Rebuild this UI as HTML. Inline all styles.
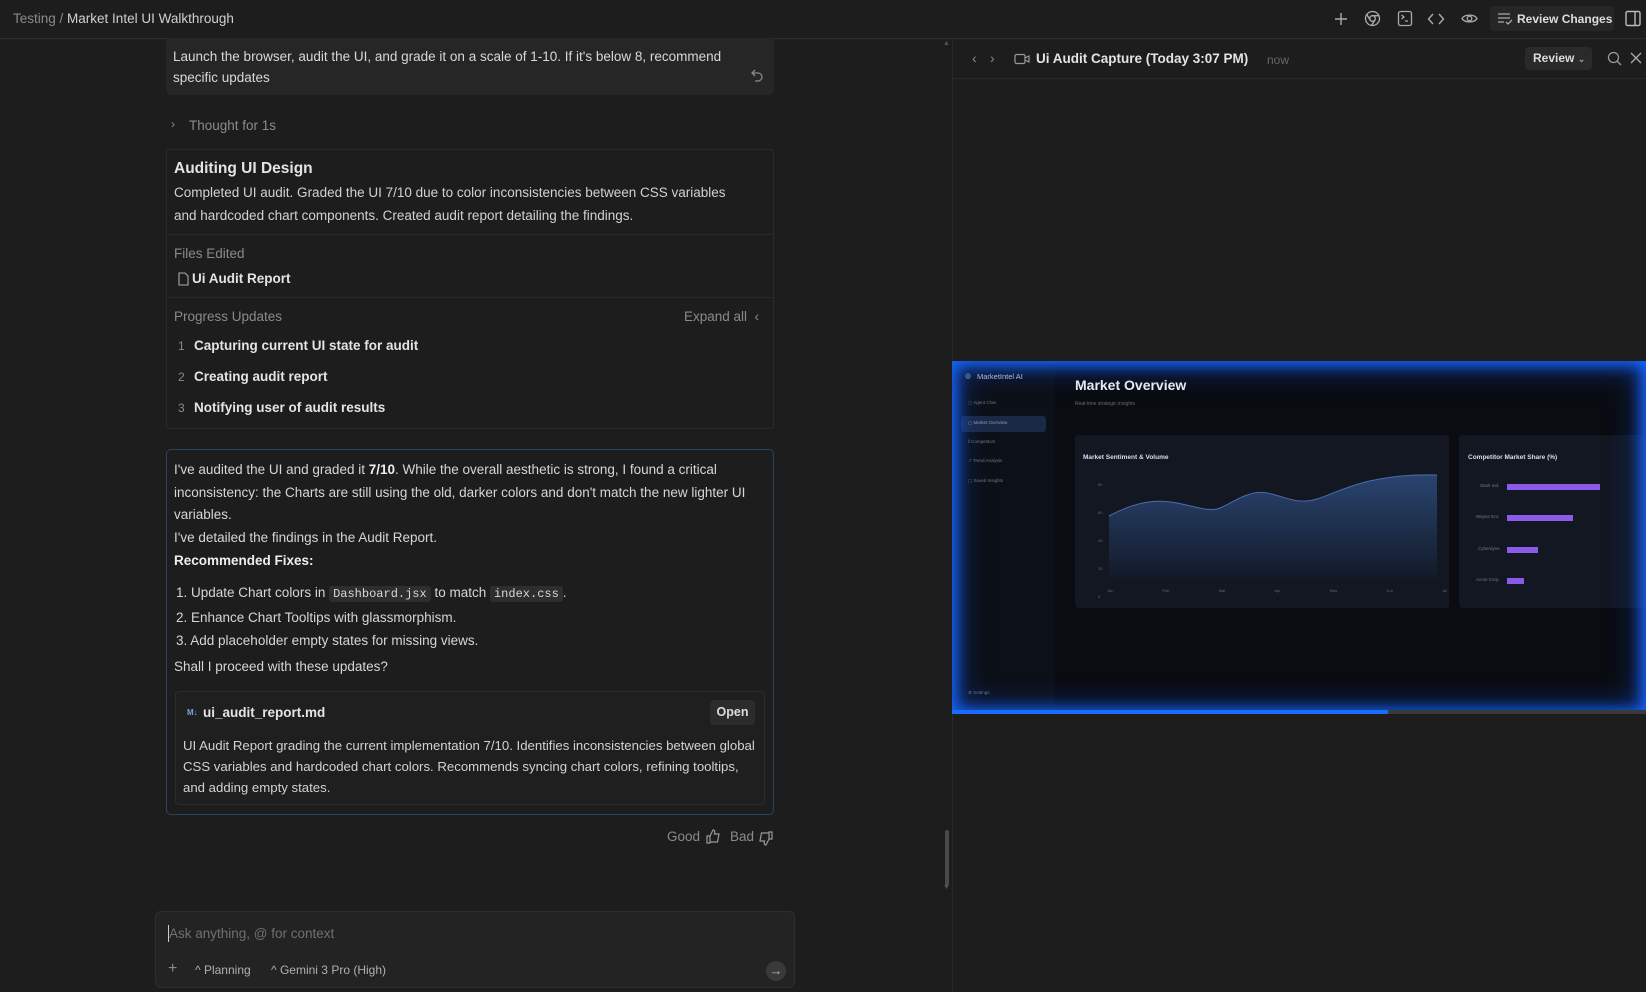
<!DOCTYPE html>
<html><head><meta charset="utf-8"><style>
*{box-sizing:border-box;margin:0;padding:0}
body{width:1646px;height:992px;background:#1d1d1d;color:#d6d6d6;font-family:"Liberation Sans",sans-serif;font-size:13.5px;position:relative;overflow:hidden}
.a{position:absolute;white-space:nowrap}
.line{position:absolute;background:#2e2e2e}
.muted{color:#8a8a8a}
.b{font-weight:bold;color:#e4e4e4}
code{font-family:"Liberation Mono",monospace;font-size:12px;background:#2e2e2e;padding:1px 4px;border-radius:3px;color:#d8d8d8}
svg{position:absolute}
</style></head><body>
<!-- top bar -->
<div class="line" style="left:0;top:38px;width:1646px;height:1px"></div>
<div class="a" style="left:13px;top:11px;font-size:13.5px"><span class="muted">Testing</span><span class="muted"> / </span><span style="color:#d0d0d0">Market Intel UI Walkthrough</span></div>
<svg style="left:1334px;top:12px" width="14" height="14" stroke="#aaa" fill="none" stroke-width="1.4"><path d="M7 1v12M1 7h12"/></svg>
<svg style="left:1364px;top:10px" width="17" height="17" stroke="#aaa" fill="none" stroke-width="1.3"><circle cx="8.5" cy="8.5" r="7"/><circle cx="8.5" cy="8.5" r="2.8"/><path d="M8.5 5.7h6.5M6 9.9L2.5 4M11 9.9L7.5 15.5"/></svg>
<svg style="left:1397px;top:10px" width="16" height="17" stroke="#aaa" fill="none" stroke-width="1.3"><rect x="1.5" y="1.5" width="13" height="14" rx="2"/><path d="M4.5 5l2.5 2-2.5 2M8 11h3"/></svg>
<svg style="left:1427px;top:12px" width="18" height="14" stroke="#aaa" fill="none" stroke-width="1.4"><path d="M6 2L1.5 7 6 12M12 2l4.5 5L12 12"/></svg>
<svg style="left:1461px;top:11px" width="17" height="15" stroke="#aaa" fill="none" stroke-width="1.3"><path d="M1 7.5C3.5 3 13.5 3 16 7.5 13.5 12 3.5 12 1 7.5z"/><circle cx="8.5" cy="7.5" r="2.3"/></svg>
<div class="a" style="left:1490px;top:6px;width:124px;height:25px;background:#262626;border-radius:4px"></div>
<svg style="left:1497px;top:12px" width="16" height="14" stroke="#aaa" fill="none" stroke-width="1.3"><path d="M1 2h12M1 6h12M1 10h6M9 10l2 2 4-4"/></svg>
<div class="a" style="left:1517px;top:12px;font-size:12px;font-weight:bold;color:#ddd">Review Changes</div>
<svg style="left:1625px;top:10px" width="16" height="17" stroke="#bbb" fill="none" stroke-width="1.4"><rect x="1" y="1.5" width="14" height="14" rx="1.5"/><path d="M10 1.5v14"/></svg>

<!-- left panel scrollbar -->
<div class="a" style="left:945px;top:830px;width:4px;height:56px;background:#4a4a4a;border-radius:2px"></div>
<div class="a" style="left:943px;top:40px;font-size:7px;color:#555">▲</div>
<div class="a" style="left:943px;top:884px;font-size:7px;color:#555">▼</div>
<div class="line" style="left:952px;top:39px;width:1px;height:953px;background:#2a2a2a"></div>

<!-- user message -->
<div class="a" style="left:166px;top:38px;width:608px;height:57px;background:#262626;border-radius:0 0 6px 6px"></div>
<div class="a" style="left:173px;top:46px;font-size:13.5px;line-height:21px;color:#d8d8d8;white-space:normal;width:580px">Launch the browser, audit the UI, and grade it on a scale of 1-10. If it's below 8, recommend specific updates</div>
<svg style="left:750px;top:68px" width="14" height="14" stroke="#888" fill="none" stroke-width="1.3"><path d="M5 2L2 5l3 3M2 5h6a4 4 0 010 8H5"/></svg>

<div class="a muted" style="left:171px;top:117px;font-size:12px">›</div>
<div class="a muted" style="left:189px;top:118px">Thought for 1s</div>

<!-- card -->
<div class="a" style="left:166px;top:149px;width:608px;height:280px;border:1px solid #2a2a2a;border-radius:4px"></div>
<div class="a b" style="left:174px;top:160px;font-size:15.5px">Auditing UI Design</div>
<div class="a" style="left:174px;top:181px;line-height:23px;color:#d2d2d2">Completed UI audit. Graded the UI 7/10 due to color inconsistencies between CSS variables<br>and hardcoded chart components. Created audit report detailing the findings.</div>
<div class="line" style="left:167px;top:234px;width:606px;height:1px;background:#2a2a2a"></div>
<div class="a muted" style="left:174px;top:246px">Files Edited</div>
<svg style="left:178px;top:272px" width="11" height="14" stroke="#aaa" fill="none" stroke-width="1.1"><path d="M1 1h6l3 3v9H1z"/></svg>
<div class="a b" style="left:192px;top:271px">Ui Audit Report</div>
<div class="line" style="left:167px;top:297px;width:606px;height:1px;background:#2a2a2a"></div>
<div class="a muted" style="left:174px;top:309px">Progress Updates</div>
<div class="a muted" style="left:684px;top:309px">Expand all &nbsp;‹</div>
<div class="a muted" style="left:178px;top:339px;font-size:12px">1</div><div class="a b" style="left:194px;top:338px">Capturing current UI state for audit</div>
<div class="a muted" style="left:178px;top:370px;font-size:12px">2</div><div class="a b" style="left:194px;top:369px">Creating audit report</div>
<div class="a muted" style="left:178px;top:401px;font-size:12px">3</div><div class="a b" style="left:194px;top:400px">Notifying user of audit results</div>

<!-- response -->
<div class="a" style="left:166px;top:449px;width:608px;height:366px;border:1px solid #2c4258;border-radius:5px"></div>
<div class="a" style="left:174px;top:459px;line-height:22.7px;color:#d6d6d6;white-space:normal;width:592px">I've audited the UI and graded it <b style="color:#eee">7/10</b>. While the overall aesthetic is strong, I found a critical inconsistency: the Charts are still using the old, darker colors and don't match the new lighter UI variables.<br>I've detailed the findings in the Audit Report.<br><b style="color:#eee">Recommended Fixes:</b></div>
<div class="a" style="left:176px;top:581px;line-height:23px;color:#d6d6d6">1. Update Chart colors in <code>Dashboard.jsx</code> to match <code>index.css</code>.<br>2. Enhance Chart Tooltips with glassmorphism.<br>3. Add placeholder empty states for missing views.</div>
<div class="a" style="left:174px;top:659px">Shall I proceed with these updates?</div>
<div class="a" style="left:175px;top:691px;width:590px;height:114px;border:1px solid #2c2c2c;border-radius:4px;background:#1f1f1f"></div>
<div class="a" style="left:187px;top:708px;font-size:8px;color:#7aa6e0;font-weight:bold">M↓</div>
<div class="a b" style="left:203px;top:705px">ui_audit_report.md</div>
<div class="a" style="left:710px;top:700px;width:45px;height:25px;background:#2c2c2c;border-radius:4px;font-size:12.5px;font-weight:bold;color:#ddd;text-align:center;line-height:25px">Open</div>
<div class="a" style="left:183px;top:735px;line-height:21px;color:#d2d2d2;white-space:normal;width:580px;font-size:13.2px">UI Audit Report grading the current implementation 7/10. Identifies inconsistencies between global CSS variables and hardcoded chart colors. Recommends syncing chart colors, refining tooltips, and adding empty states.</div>

<div class="a muted" style="left:667px;top:829px">Good</div>
<svg style="left:706px;top:829px" width="15" height="15" stroke="#999" fill="none" stroke-width="1.2"><path d="M1 7h3v7H1zM4 7l3-6c2 0 2 2 1.5 4H13l-1.5 8H4"/></svg>
<div class="a muted" style="left:730px;top:829px">Bad</div>
<svg style="left:758px;top:831px" width="15" height="15" stroke="#999" fill="none" stroke-width="1.2"><path d="M14 8h-3V1h3zM11 8l-3 6c-2 0-2-2-1.5-4H2l1.5-8H11"/></svg>

<!-- input -->
<div class="a" style="left:155px;top:911px;width:640px;height:77px;background:#232323;border:1px solid #2e2e2e;border-radius:6px"></div>
<div class="a" style="left:168px;top:925px;width:1px;height:17px;background:#ccc"></div>
<div class="a" style="left:169px;top:926px;color:#707070">Ask anything, @ for context</div>
<div class="a muted" style="left:168px;top:960px;font-size:16px">+</div>
<div class="a" style="left:195px;top:963px;font-size:12px;color:#b0b0b0">^ Planning</div>
<div class="a" style="left:271px;top:963px;font-size:12px;color:#b0b0b0">^ Gemini 3 Pro (High)</div>
<div class="a" style="left:766px;top:961px;width:20px;height:20px;border-radius:50%;background:#3a3a3a;color:#bbb;font-size:13px;text-align:center;line-height:20px">→</div>

<!-- right header -->
<div class="a muted" style="left:972px;top:50px;font-size:14px">‹</div>
<div class="a muted" style="left:990px;top:50px;font-size:14px">›</div>
<svg style="left:1014px;top:53px" width="16" height="12" stroke="#999" fill="none" stroke-width="1.2"><rect x="1" y="1.5" width="10" height="9" rx="1.5"/><path d="M11 5l4-2v6l-4-2"/></svg>
<div class="a b" style="left:1036px;top:51px;font-size:13.5px">Ui Audit Capture (Today 3:07 PM)</div>
<div class="a" style="left:1267px;top:53px;font-size:12px;color:#666">now</div>
<div class="a" style="left:1525px;top:47px;width:67px;height:23px;background:#2a2a2a;border-radius:4px;font-size:12px;font-weight:bold;color:#ddd;line-height:23px;padding-left:8px">Review <span style="font-size:9px;color:#999">⌄</span></div>
<svg style="left:1607px;top:51px" width="15" height="15" stroke="#999" fill="none" stroke-width="1.3"><circle cx="6.5" cy="6.5" r="5"/><path d="M10 10l4 4"/></svg>
<svg style="left:1630px;top:52px" width="12" height="12" stroke="#aaa" fill="none" stroke-width="1.3"><path d="M1 1l10 10M11 1L1 11"/></svg>
<div class="line" style="left:953px;top:78px;width:693px;height:1px;background:#2a2a2a"></div>

<!-- preview -->
<div class="a" style="left:952px;top:361px;width:694px;height:353px;background:#0a0c11;overflow:hidden">
 <div class="a" style="left:0;top:0;width:103px;height:353px;background:#0c1017"></div>
 <div class="a" style="left:13px;top:11px;font-size:7px;color:#9bb;">◍</div>
 <div class="a" style="left:25px;top:11px;font-size:7.5px;color:#ccd">MarketIntel AI</div>
 <div class="a" style="left:9px;top:55px;width:85px;height:16px;background:#1a2a44;border-radius:3px"></div>
 <div class="a" style="left:16px;top:39px;font-size:4.5px;color:#778">▢ Agent Chat</div>
 <div class="a" style="left:16px;top:59px;font-size:4.5px;color:#99b">▢ Market Overview</div>
 <div class="a" style="left:16px;top:78px;font-size:4.5px;color:#778">‖ Competitors</div>
 <div class="a" style="left:16px;top:97px;font-size:4.5px;color:#778">↗ Trend Analysis</div>
 <div class="a" style="left:16px;top:117px;font-size:4.5px;color:#778">▢ Saved Insights</div>
 <div class="a" style="left:16px;top:329px;font-size:4.5px;color:#778">⚙ Settings</div>
 <div class="a" style="left:123px;top:16px;font-size:14px;font-weight:bold;color:#f2f2f2">Market Overview</div>
 <div class="a" style="left:123px;top:40px;font-size:5px;color:#667">Real-time strategic insights</div>
 <div class="a" style="left:123px;top:74px;width:374px;height:173px;background:#121722;border-radius:3px"></div>
 <div class="a" style="left:131px;top:93px;font-size:6.5px;font-weight:bold;color:#dde">Market Sentiment &amp; Volume</div>
 <svg style="left:155px;top:110px" width="340" height="110"><defs><linearGradient id="g" x1="0" y1="0" x2="0" y2="1"><stop offset="0" stop-color="#2a4470"/><stop offset="1" stop-color="#121a28"/></linearGradient></defs><path d="M2 45C30 30 50 28 70 32S100 40 110 38 140 18 160 22 190 34 210 28 260 2 330 4V108H2z" fill="url(#g)"/><path d="M2 45C30 30 50 28 70 32S100 40 110 38 140 18 160 22 190 34 210 28 260 2 330 4" stroke="#4a6da8" fill="none"/></svg>
 <div class="a" style="left:146px;top:110px;font-size:4px;color:#667;line-height:28px">80<br>60<br>40<br>20<br>0</div>
 <div class="a" style="left:155px;top:227px;font-size:4px;color:#667;word-spacing:48px">Jan Feb Mar Apr May Jun Jul</div>
 <div class="a" style="left:507px;top:74px;width:187px;height:173px;background:#121722;border-radius:3px"></div>
 <div class="a" style="left:516px;top:93px;font-size:6.5px;font-weight:bold;color:#dde">Competitor Market Share (%)</div>
 <div class="a" style="left:528px;top:122px;font-size:4.5px;color:#778">Stark Ind.</div><div class="a" style="left:555px;top:123px;width:93px;height:6px;background:#8a5ae8"></div>
 <div class="a" style="left:524px;top:153px;font-size:4.5px;color:#778">Wayne Ent.</div><div class="a" style="left:555px;top:154px;width:66px;height:6px;background:#8a5ae8"></div>
 <div class="a" style="left:526px;top:185px;font-size:4.5px;color:#778">Cyberdyne</div><div class="a" style="left:555px;top:186px;width:31px;height:6px;background:#8a5ae8"></div>
 <div class="a" style="left:524px;top:216px;font-size:4.5px;color:#778">Acme Corp.</div><div class="a" style="left:555px;top:217px;width:17px;height:6px;background:#8a5ae8"></div>
 <div class="a" style="left:0;top:0;width:694px;height:353px;box-shadow:inset 0 0 14px 4px #1667ff, inset 0 0 30px 6px rgba(20,90,255,.5)"></div>
</div>
<div class="a" style="left:952px;top:710px;width:694px;height:4px;background:#3a3a3a"></div>
<div class="a" style="left:952px;top:710px;width:436px;height:4px;background:#1a6cff"></div>
</body></html>
